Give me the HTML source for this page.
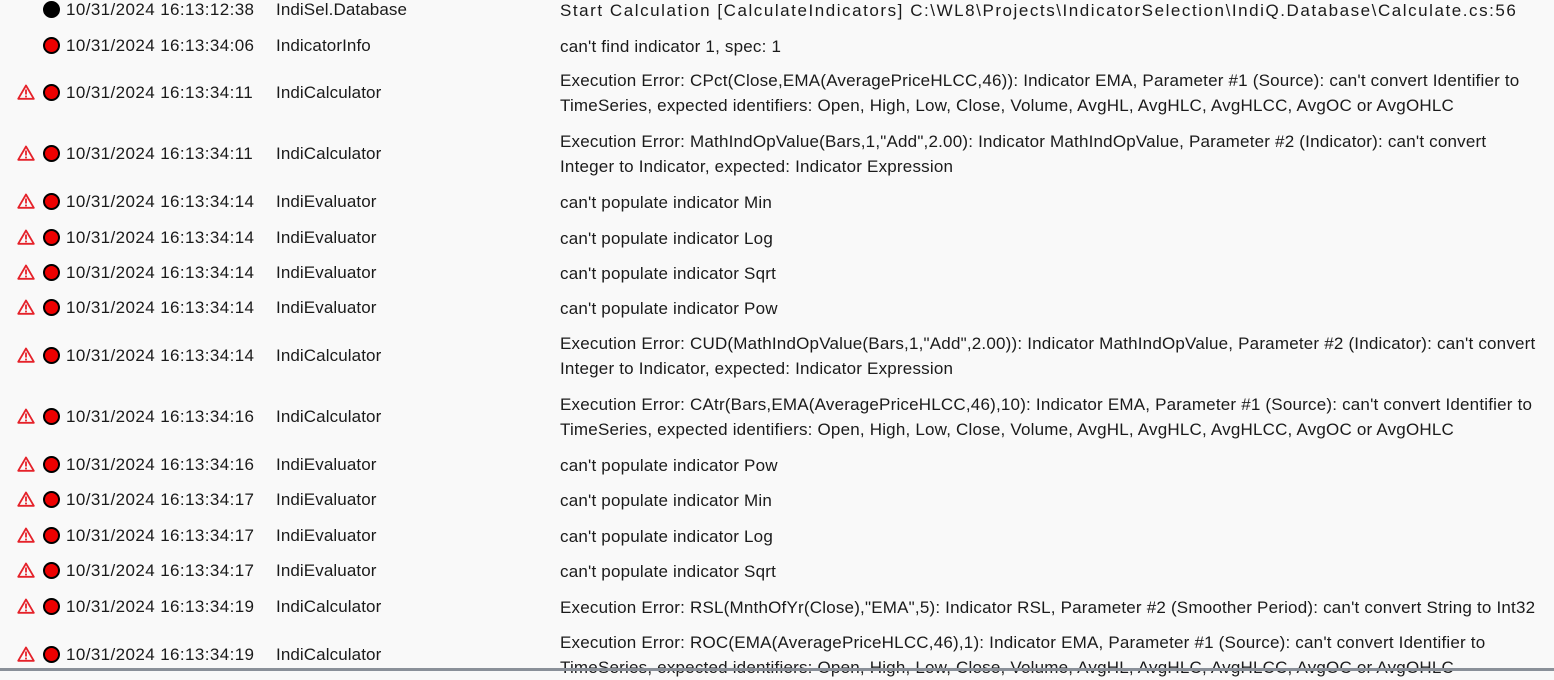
<!DOCTYPE html>
<html><head><meta charset="utf-8"><style>
body{margin:0;width:1554px;height:671px;background:#f9f9f9;overflow:hidden;position:relative;font-family:"Liberation Sans",sans-serif;font-size:17px;color:#1a1a1a}
.w{position:absolute;left:17px;width:18px;height:16px}
.d{position:absolute;left:43px;width:13px;height:13px;border-radius:50%;background:#e00;border:2.5px solid #000}
.t{position:absolute;left:66px;width:192px;overflow:hidden;white-space:nowrap;letter-spacing:0.4px}
.s{position:absolute;left:276px;white-space:nowrap;letter-spacing:0.1px}
.m{position:absolute;left:560px;white-space:nowrap;line-height:25px;letter-spacing:0.2px}
.bar{position:absolute;left:0;top:668px;width:1554px;height:3px;background:#8a9099}
</style></head><body>
<svg width="0" height="0" style="position:absolute"><defs><symbol id="wi" viewBox="0 0 18 16"><path d="M9 1.5 L16.8 14.8 H1.2 Z" fill="none" stroke="#e5222a" stroke-width="1.8" stroke-linejoin="round"/><rect x="8.1" y="5.5" width="1.8" height="5" fill="#e5222a"/><rect x="8.1" y="11.6" width="1.8" height="1.8" fill="#e5222a"/></symbol></defs></svg>
<div id="rows"></div>
<script>
var R=[
[9,0,"k","10/31/2024 16:13:12:38","IndiSel.Database",["Start Calculation [CalculateIndicators] C:\\WL8\\Projects\\IndicatorSelection\\IndiQ.Database\\Calculate.cs:56"]],
[45,0,"r","10/31/2024 16:13:34:06","IndicatorInfo",["can't find indicator 1, spec: 1"]],
[92,1,"r","10/31/2024 16:13:34:11","IndiCalculator",["Execution Error: CPct(Close,EMA(AveragePriceHLCC,46)): Indicator EMA, Parameter #1 (Source): can't convert Identifier to","TimeSeries, expected identifiers: Open, High, Low, Close, Volume, AvgHL, AvgHLC, AvgHLCC, AvgOC or AvgOHLC"]],
[153,1,"r","10/31/2024 16:13:34:11","IndiCalculator",["Execution Error: MathIndOpValue(Bars,1,\"Add\",2.00): Indicator MathIndOpValue, Parameter #2 (Indicator): can't convert","Integer to Indicator, expected: Indicator Expression"]],
[201,1,"r","10/31/2024 16:13:34:14","IndiEvaluator",["can't populate indicator Min"]],
[237,1,"r","10/31/2024 16:13:34:14","IndiEvaluator",["can't populate indicator Log"]],
[272,1,"r","10/31/2024 16:13:34:14","IndiEvaluator",["can't populate indicator Sqrt"]],
[307,1,"r","10/31/2024 16:13:34:14","IndiEvaluator",["can't populate indicator Pow"]],
[355,1,"r","10/31/2024 16:13:34:14","IndiCalculator",["Execution Error: CUD(MathIndOpValue(Bars,1,\"Add\",2.00)): Indicator MathIndOpValue, Parameter #2 (Indicator): can't convert","Integer to Indicator, expected: Indicator Expression"]],
[416,1,"r","10/31/2024 16:13:34:16","IndiCalculator",["Execution Error: CAtr(Bars,EMA(AveragePriceHLCC,46),10): Indicator EMA, Parameter #1 (Source): can't convert Identifier to","TimeSeries, expected identifiers: Open, High, Low, Close, Volume, AvgHL, AvgHLC, AvgHLCC, AvgOC or AvgOHLC"]],
[464,1,"r","10/31/2024 16:13:34:16","IndiEvaluator",["can't populate indicator Pow"]],
[499,1,"r","10/31/2024 16:13:34:17","IndiEvaluator",["can't populate indicator Min"]],
[535,1,"r","10/31/2024 16:13:34:17","IndiEvaluator",["can't populate indicator Log"]],
[570,1,"r","10/31/2024 16:13:34:17","IndiEvaluator",["can't populate indicator Sqrt"]],
[606,1,"r","10/31/2024 16:13:34:19","IndiCalculator",["Execution Error: RSL(MnthOfYr(Close),\"EMA\",5): Indicator RSL, Parameter #2 (Smoother Period): can't convert String to Int32"]],
[654,1,"r","10/31/2024 16:13:34:19","IndiCalculator",["Execution Error: ROC(EMA(AveragePriceHLCC,46),1): Indicator EMA, Parameter #1 (Source): can't convert Identifier to","TimeSeries, expected identifiers: Open, High, Low, Close, Volume, AvgHL, AvgHLC, AvgHLCC, AvgOC or AvgOHLC"]]
];
var h="";
R.forEach(function(a,i){var y=a[0];
if(a[1])h+='<svg class="w" style="top:'+(y-8)+'px" viewBox="0 0 18 16"><use href="#wi"/></svg>';
h+='<div class="d" style="top:'+(y-8)+'px;'+(a[2]=="k"?"background:#000":"")+'"></div>';
h+='<div class="t" style="top:'+(y-9)+'px">'+a[3]+'</div>';
h+='<div class="s" style="top:'+(y-9)+'px">'+a[4]+'</div>';
var n=a[5].length;h+='<div class="m" style="top:'+(y-12.5*n+1)+'px;'+(i==0?'letter-spacing:1.55px':'')+'">'+a[5].map(function(s){return s.replace(/&/g,"&amp;").replace(/</g,"&lt;")}).join("<br>")+'</div>';
});
document.getElementById("rows").innerHTML=h;
</script>
<div class="bar"></div>
</body></html>
